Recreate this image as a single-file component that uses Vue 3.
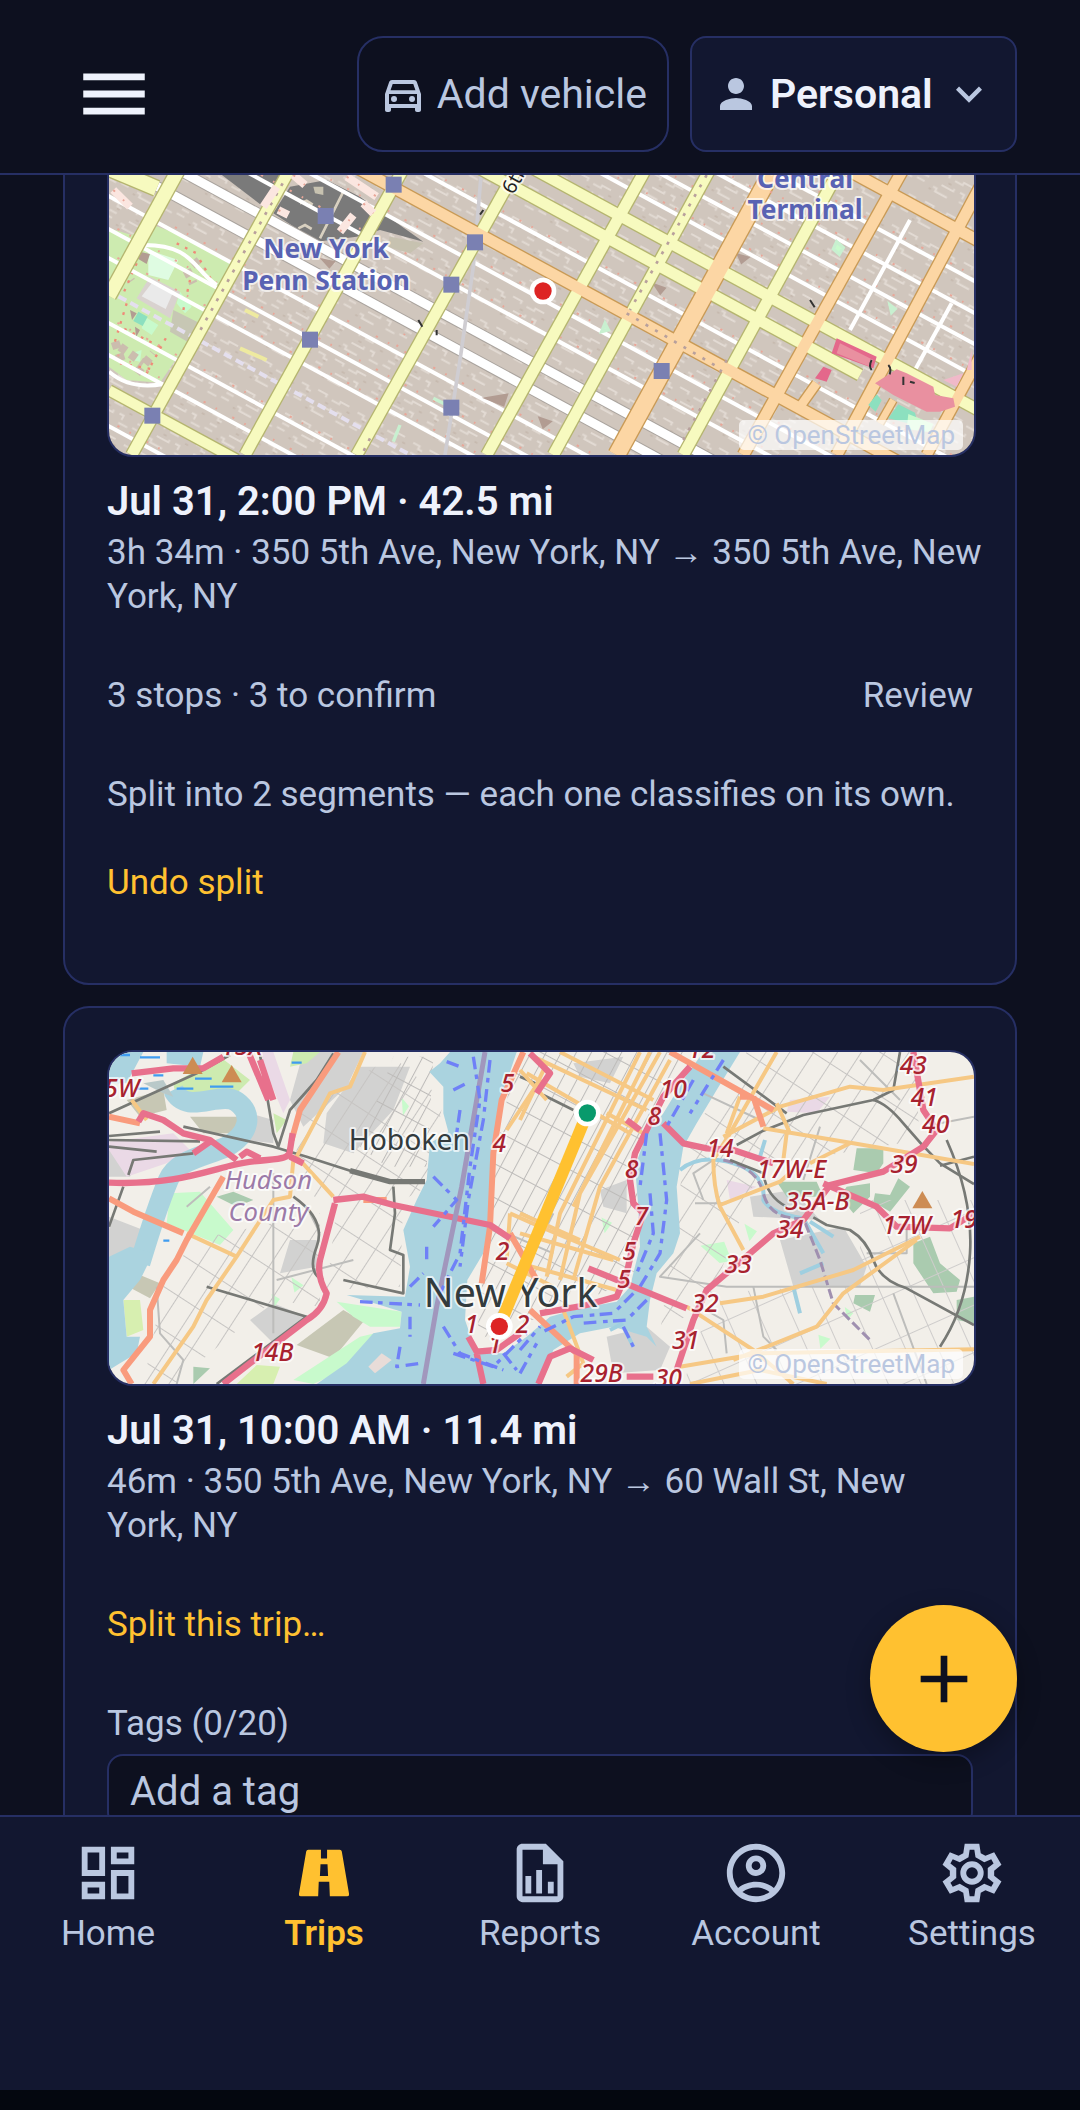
<template>
  <div class="app">
    <header class="topbar">
      <button class="menu-btn" type="button" aria-label="Open menu">
        <svg viewBox="0 0 24 24"><path d="M3 18h18v-2H3v2zm0-5h18v-2H3v2zm0-7v2h18V6H3z" /></svg>
      </button>
      <button class="vehicle-btn" type="button">
        <svg viewBox="0 0 24 24">
          <path d="M18.92 6.01C18.72 5.42 18.16 5 17.5 5h-11c-.66 0-1.21.42-1.42 1.01L3 12v8c0 .55.45 1 1 1h1c.55 0 1-.45 1-1v-1h12v1c0 .55.45 1 1 1h1c.55 0 1-.45 1-1v-8l-2.08-5.99zM6.85 7h10.29l1.08 3.11H5.77L6.85 7zM19 17H5v-5h14v5z" />
          <circle cx="7.5" cy="14.5" r="1.5" />
          <circle cx="16.5" cy="14.5" r="1.5" />
        </svg>
        Add vehicle
      </button>
      <div class="profile">
        <svg viewBox="0 0 24 24"><path d="M12 12c2.21 0 4-1.79 4-4s-1.79-4-4-4-4 1.79-4 4 1.79 4 4 4zm0 2c-2.67 0-8 1.34-8 4v2h16v-2c0-2.66-5.33-4-8-4z" /></svg>
        <select v-model="profile" aria-label="Profile">
          <option>Personal</option>
        </select>
        <svg class="chevron" viewBox="0 0 24 24"><path d="M16.59 8.59L12 13.17 7.41 8.59 6 10l6 6 6-6z" /></svg>
      </div>
    </header>

    <main class="content">
      <div class="trips">
        <article class="card">
          <div class="map">
            <svg class="tiles" viewBox="147 -111 2595 996" preserveAspectRatio="xMidYMid slice" role="img" aria-label="Midtown map">
              <defs>
                <pattern id="blocks" width="190" height="105" patternUnits="userSpaceOnUse" patternTransform="rotate(28.5)">
                  <rect width="190" height="105" fill="#d0c6bd" />
                  <path d="M6 30h22v10h14M60 26h30v10M110 34h26v-8h30M12 60h24M80 64h40v-8M140 58h14v14M4 78h26M60 80h12v10h40M150 84h30" fill="none" stroke="#e2dad3" stroke-width="6" />
                  <path d="M30 46h8M96 50h10M50 90h8M166 44h10" stroke="#c6b9ae" stroke-width="5" />
                </pattern>
              </defs>
              <rect x="147" y="-111" width="2595" height="996" fill="url(#blocks)" />

              <!-- park -->
              <path d="M147 205L215 225 280 195 400 240 530 320 445 455 300 668 200 660 147 620z" fill="#cdebb0" />
              <path d="M265 270l90 30-30 60-60-15z" fill="#dffce2" />
              <path d="M360 395l35 45-20 20-25-30zM215 580l30-10-5 35-25-5zM255 470l40 25-20 30-30-20z" fill="#c8facc" />
              <path d="M235 455l28 15-15 28-28-15z" fill="#8ce0bf" />
              <path d="M270 350l90 45-30 80-100-60z" fill="#d9d2cf" />
              <path d="M275 370l62 32-20 45-72-38z" fill="#eaeaea" />
              <path d="M225 272l45 10-10 30-25-15zM210 450l20 10-14 20zM225 500l15 10-12 22z" fill="#b29c92" />
              <path d="M340 450l80 40-30 60-60-35z" fill="#c7c7b4" />
              <path d="M165 545l20 60M400 300l26 30M380 330l20 40M190 330l24 34M180 560l70 50M230 640l50-60" stroke="#cbbdae" stroke-width="26" stroke-dasharray="22 16" fill="none" />
              <path d="M180 330l60-60M200 430L160 560M300 560L180 500M260 640l60-110M420 300l40 70M390 360l-20 90M230 310l-40 90M350 250l60 30M180 610l110 20" stroke="#ef8b78" stroke-width="7" stroke-dasharray="8 20" fill="none" />

              <!-- rail yard -->
              <path d="M466 30L668 30 610 140zM690 80L800 60 900 110 1090 245 960 210 890 230 770 245 640 160z" fill="#7a7a7a" />
              <path d="M760 80l30 0 0 25-25-5zM990 230l100 20-40 30-70-20z" fill="#c7c2b0" />
              <path d="M720 130l20-8 18 12M715 205l20-10 20 12M850 95L780 235" fill="none" stroke="#d8d0c0" stroke-width="8" />

              <path v-for="c in streets" :key="'r' + c" :d="street(c - 15)" class="specks" />
              <path v-for="c in streets" :key="'s' + c" :d="street(c)" class="street" />
              <path :d="street(314)" class="street dashed" />
              <path d="M240 255C400 250 400 330 470 375M147 635Q210 690 310 672M2550 180L2370 510M2675 430L2565 630" class="street" />
              <path v-for="c in [-163, -79]" :key="'w' + c" :d="street(c)" class="wide-casing" />
              <path v-for="c in [-163, -79]" :key="'x' + c" :d="street(c)" class="wide" />
              <path d="M1265 -111L1262 60 1240 320 1200 600 1155 885" fill="none" stroke="#cfcdd2" stroke-width="11" />
              <path d="M540 565L620 600M555 450l40 20" stroke="#eeeaa0" stroke-width="12" />
              <path d="M1020 795l-20 50M1120 715l40 20M2330 245l20 18-12 20-18-16zM1635 490l10 20-20 5zM2490 435l15 12-10 10z" fill="#c8facc" stroke="#c8f0d0" stroke-width="10" />
              <path d="M1280 715l60-10-10 30zM1440 775l30 10-20 16zM790 300l30 6-12 14zM2035 285l28 8-18 14zM1785 375l28 10-12 14z" fill="#b29c92" stroke="#b29c92" stroke-width="8" />

              <path v-for="r in midtown" :key="'c' + r.d" :d="r.d" fill="none" :stroke="r.casing" :stroke-width="r.w + 8" />
              <path v-for="r in midtown" :key="'f' + r.d" :d="r.d" fill="none" :stroke="r.fill" :stroke-width="r.w" />
              <path d="M668 70L410 530M1940 45L1710 450M930 835L905 885M2000 600L1870 840M1700 460L1980 625" class="dots" />

              <path d="M650 80l-40 60M700 45l35 30M860 50l90 60M840 215l40-50M910 130l30 30M160 90l50 50M655 150l30 15" class="specks heavy" />
              <path d="M700 45l35 30M860 50l90 60M840 215l40-50M910 130l30 30M160 90l50 50M655 150l30 15M1010 560l25-40M2130 95l50 25" class="specks" />
              <path d="M2330 535L2450 590 2440 625 2315 580zM2290 620l25 10-15 35-35-10z" fill="#e4688b" />
              <path d="M2340 550L2440 600 2430 620 2330 580zM2445 670L2510 628 2540 640 2620 680 2625 705 2680 715 2685 740 2640 755 2600 755 2500 705z" fill="#e990a0" />
              <path d="M2650 660l60-20-20 40zM2735 570v60h-15z" fill="#f0b9c9" />
              <path d="M2425 735l25-32 15 18-18 34zM2485 775l30-42 50 25 10 40z" fill="#8ce0bf" />
              <path d="M2545 762l75 30-10 25-70-10z" fill="#c8facc" />
              <path d="M2435 600q-10 20 0 30M2485 615q10 10 4 28M2530 650v25M2550 665l14 4M1270 150l-10 14M1075 480l12 20M1130 510v16M2250 420l14 22" stroke="#333" stroke-width="6" fill="none" />

              <rect v-for="([x, y], i) in stations" :key="i" :x="x - 24" :y="y - 24" width="48" height="48" fill="#7a80b2" />
              <g class="station-label">
                <text x="798" y="295">New York</text>
                <text x="798" y="389">Penn Station</text>
                <text x="2235" y="83">Central</text>
                <text x="2235" y="177">Terminal</text>
              </g>
              <text class="ave-label" transform="translate(1360 106) rotate(-61)">6th Avenue</text>

              <circle cx="1449" cy="393" r="40" fill="#fff" />
              <circle cx="1449" cy="393" r="26" fill="#dd2424" />
            </svg>
            <span class="credit">© OpenStreetMap</span>
          </div>
          <h2>Jul 31, 2:00 PM · 42.5 mi</h2>
          <p class="route">3h 34m · 350 5th Ave, New York, NY → 350 5th Ave, New York, NY</p>
          <div class="row stops">
            <span>3 stops · 3 to confirm</span>
            <button class="text-btn" type="button">Review</button>
          </div>
          <p class="note">Split into 2 segments — each one classifies on its own.</p>
          <button class="text-btn accent undo" type="button">Undo split</button>
        </article>

        <article class="card">
          <div class="map">
            <svg class="tiles" viewBox="147 156 2595 996" preserveAspectRatio="xMidYMid slice" role="img" aria-label="New York trip map">
              <defs>
                <pattern id="gridA" width="40" height="90" patternUnits="userSpaceOnUse" patternTransform="rotate(28)">
                  <path d="M0 0V90M0 0H40" stroke="#bdbbb9" stroke-width="6" fill="none" />
                </pattern>
                <pattern id="gridB" width="60" height="110" patternUnits="userSpaceOnUse" patternTransform="rotate(33)">
                  <path d="M0 0V110M0 0H60" stroke="#c6c4c2" stroke-width="6" fill="none" />
                </pattern>
                <pattern id="gridC" width="90" height="130" patternUnits="userSpaceOnUse" patternTransform="rotate(-24)">
                  <path d="M0 0V130M0 0H90" stroke="#cecccb" stroke-width="6" fill="none" />
                </pattern>
              </defs>
              <rect x="147" y="156" width="2595" height="996" fill="#f2efe9" />

              <!-- land use -->
              <path d="M730 156H910L860 260 730 380 690 300zM147 430L260 440 210 530 147 530zM800 340L900 200 1050 200 1000 330 880 460 790 430zM147 650L250 690 250 760 180 780 147 770zM570 340L640 360 640 430 560 420zM570 960L640 910 740 950 640 1030zM690 720L770 720 770 800 660 820z" fill="#d2d2d1" />
              <path d="M1540 190L1690 170 1650 250 1560 230zM1620 570L1700 540 1700 640 1630 620zM2070 590L2200 570 2280 660 2080 650zM2160 720L2350 680 2420 800 2400 860 2200 860zM1640 1010L1760 980 1830 1040 1800 1110 1660 1120z" fill="#d2d2d1" />
              <path d="M600 156H640L690 300 670 340 620 220zM147 425L340 400 390 450 320 490 200 530 147 450zM2190 300L2310 290 2270 340 2180 335zM2000 540L2090 560 2010 600z" fill="#ead9e6" />
              <path d="M480 170L570 240 530 280 350 305 340 250zM700 156H780L740 190 690 200zM640 340L680 360 650 400z" fill="#cdebb0" />
              <path d="M200 300L310 270 320 330 240 350zM390 350L550 350 530 400 430 400zM850 930L910 965 820 1075 710 1035zM240 825L300 850 270 895 205 860z" fill="#c7c7b4" />
              <path d="M330 580L420 575 520 690 480 735 320 670zM830 905L1025 935 1020 980 930 980 880 950zM900 1010L945 1000 850 1110 760 1152 700 1140z" fill="#c8facc" />
              <path d="M590 1095L660 1100 640 1152H530zM190 900L240 900 250 990 200 1010z" fill="#d7efb0" />
              <path d="M2390 445L2470 445 2470 490 2450 520 2380 510zM2150 545L2270 545 2290 590 2180 590zM2360 560L2430 550 2430 590 2380 640 2340 590zM2445 580L2490 585 2515 535 2550 560 2490 635 2440 605zM2560 730L2610 710 2640 790 2700 840 2690 875 2620 880 2560 790zM2385 885L2445 885 2430 935 2380 910zM2690 900L2742 890V970L2690 960zM470 590L520 575 580 600 530 620zM400 1100L450 1105 400 1152z" fill="#aacbaf" />
              <path d="M1930 740l60-10 20 50-30 5zM2060 680l25 15-15 20zM1630 660l20 10-14 20zM1030 305l12 14-10 16zM700 840l24 16-18 14zM640 890l14 8-10 14zM2280 1010l24 8-20 20zM2360 930l14 10-10 12zM2410 1110l30 10" fill="#c8facc" stroke="#c8facc" stroke-width="8" />

              <path d="M720 330L1000 170 1150 300 1100 560 1030 600 1020 860 800 870 830 620 700 560z" fill="url(#gridB)" />
              <path d="M400 720L780 640 780 920 640 900 340 1152H250L310 860z" fill="url(#gridB)" />
              <path d="M1370 156H1900L1740 430 1720 840 1500 930 1250 1020 1300 500z" fill="url(#gridA)" />
              <path d="M1000 170L1120 170 1100 500 980 500 900 440z" fill="url(#gridA)" />
              <path d="M1880 420L2060 156H2560L2580 420 2100 500 1950 900 1800 1000z" fill="url(#gridB)" />
              <path d="M1960 880L2250 860 2742 860V1152H1870zM2400 600H2742V860H2400z" fill="url(#gridC)" />

              <!-- water -->
              <path d="M1170 156L1140 190 1108 215 1150 260 1150 340 1165 395 1110 430 1100 540 1070 600 1030 690 1050 800 1035 890 860 885 960 915 1025 935 1020 985 940 1000 860 1090 770 1152H1440L1480 1050 1560 1000 1660 980 1760 1010 1790 1040 1760 980 1770 900 1790 820 1840 760 1860 700 1850 560 1870 440 1910 370 1970 270 2040 156H1930L1880 225 1810 340 1760 400 1725 500 1735 620 1740 740 1710 860 1670 905 1560 925 1470 950 1400 1010 1330 1060 1250 1060 1215 960 1222 840 1270 760 1290 660 1300 450 1325 290 1370 156z" fill="#aad3df" />
              <path d="M340 270C380 350 480 270 530 305S570 400 500 440C430 470 350 480 325 540S270 690 240 790" fill="none" stroke="#aad3df" stroke-width="62" />
              <path d="M147 770L210 740 280 760 240 840 190 900 200 1010 240 1010 230 1060 180 1090 147 1110zM147 156H250L200 250 147 250zM320 156H430L420 200 320 190z" fill="#aad3df" />
              <path d="M250 250L310 240 340 290 310 280z" fill="#b9c9c9" />
              <path d="M925 1100l40-40 30 20-50 40z" fill="#e8dcd8" />
              <path d="M1860 510Q1920 460 2020 490T2110 600Q2130 640 2230 655L2290 760M2115 420L2100 470 2110 500M2250 665L2320 710M2220 820L2290 790M2200 860L2220 940M1690 980L1720 1040M1650 990L1690 970" fill="none" stroke="#9fcfe0" stroke-width="12" />
              <path d="M1990 480Q2090 500 2110 580T2230 655L2280 780 2320 910 2430 1020" fill="none" stroke="#a090b0" stroke-width="9" stroke-dasharray="30 12" />

              <path v-for="d in minor" :key="d" :d="d" class="line minor" />
              <path v-for="d in rail" :key="d" :d="d" class="line rail" />
              <path d="M870 512L990 545H1095" class="line" stroke="#777975" stroke-width="16" />
              <path v-for="d in secondary" :key="d" :d="d" class="line secondary" />
              <path v-for="d in primary" :key="d" :d="d" class="line primary" />
              <path v-for="d in motorway" :key="d" :d="d" class="line motorway" />

              <!-- ferries and the river boundary -->
              <path d="M1275 156L1205 560 1130 920 1090 1152" fill="none" stroke="#a197bd" stroke-width="15" />
              <path v-for="d in ferries" :key="d" :d="d" class="line ferry" />
              <path d="M240 172h60M280 226h30M405 236h50M450 260h70M350 266h50M695 188h30M225 266h40M310 722h18M180 165h30" stroke="#3f9cf0" stroke-width="7" />

              <path v-for="([x, y], i) in peaks" :key="i" :d="`M${x} ${y}l30 52h-60z`" fill="#cd8c53" />

              <g class="exit-label">
                <text v-for="([t, x, y], i) in exits" :key="i" :x="x" :y="y">{{ t }}</text>
              </g>
              <text class="town" x="1048" y="449">Hoboken</text>
              <g class="county">
                <text x="625" y="568">Hudson</text>
                <text x="625" y="663">County</text>
              </g>
              <text class="city" x="1352" y="920">New York</text>

              <path d="M1318 979L1582 339" stroke="#ffc130" stroke-width="36" />
              <circle cx="1318" cy="979" r="40" fill="#fff" />
              <circle cx="1318" cy="979" r="26" fill="#dd2424" />
              <circle cx="1582" cy="339" r="40" fill="#fff" />
              <circle cx="1582" cy="339" r="26" fill="#089a6c" />
            </svg>
            <span class="credit">© OpenStreetMap</span>
          </div>
          <h2>Jul 31, 10:00 AM · 11.4 mi</h2>
          <p class="route">46m · 350 5th Ave, New York, NY → 60 Wall St, New York, NY</p>
          <button class="text-btn accent split" type="button">Split this trip…</button>
          <label class="tag-label" for="tag">Tags (0/20)</label>
          <input id="tag" v-model="tag" class="tag-input" type="text" placeholder="Add a tag" />
        </article>
      </div>

      <button class="fab" type="button" aria-label="Add trip">
        <svg viewBox="0 0 24 24"><path d="M19 13h-6v6h-2v-6H5v-2h6V5h2v6h6v2z" /></svg>
      </button>
    </main>

    <nav class="tabs">
      <a v-for="tab in tabs" :key="tab.name" href="#" :class="{ active: tab.name === 'Trips' }">
        <svg viewBox="0 0 24 24"><path fill-rule="evenodd" :d="tab.icon" /></svg>
        {{ tab.name }}
      </a>
    </nav>
  </div>
</template>

<script setup>
import { ref } from 'vue'

const profile = ref('Personal')
const tag = ref('')

const tabs = [
  { name: 'Home', icon: 'M19 5v2h-4V5h4M9 5v6H5V5h4m10 8v6h-4v-6h4M9 17v2H5v-2h4M21 3h-8v6h8V3zM11 3H3v10h8V3zm10 8h-8v10h8V11zm-10 4H3v6h8v-6z' },
  { name: 'Trips', icon: 'M6.6 4H10.95V7H13.05V4H17.4Q18 4 18.1 4.6L20.6 19.2Q20.7 20 20 20H14L13.8 15H10.2L10 20H4Q3.3 20 3.4 19.2L5.9 4.6Q6 4 6.6 4zM10.8 9L10.6 13H13.4L13.2 9z' },
  { name: 'Reports', icon: 'M14 2H6c-1.1 0-2 .9-2 2v16c0 1.1.9 2 2 2h12c1.1 0 2-.9 2-2V8l-6-6zM6 4h7v5h5v11H6V4zM7 13h2v6H7zM10.7 11h2v8h-2zM14.7 15h2v4h-2z' },
  { name: 'Account', icon: 'M12 2C6.48 2 2 6.48 2 12s4.48 10 10 10 10-4.48 10-10S17.52 2 12 2zM7.35 18.5C8.66 17.56 10.26 17 12 17s3.34.56 4.65 1.5C15.34 19.44 13.74 20 12 20s-3.34-.56-4.65-1.5zm10.79-1.38C16.45 15.8 14.32 15 12 15s-4.45.8-6.14 2.12C4.7 15.73 4 13.95 4 12c0-4.42 3.58-8 8-8s8 3.58 8 8c0 1.95-.7 3.73-1.86 5.12zM12 6c-1.93 0-3.5 1.57-3.5 3.5S10.07 13 12 13s3.5-1.57 3.5-3.5S13.93 6 12 6zm0 5c-.83 0-1.5-.67-1.5-1.5S11.17 8 12 8s1.5.67 1.5 1.5S12.83 11 12 11z' },
  { name: 'Settings', icon: 'M9.5 2h5l.5 3.2 1.6.9 3-1.2 2.5 4.3-2.5 2v1.7l2.5 2-2.5 4.2-3-1.2-1.6.9-.5 3.2h-5L9 18.8l-1.6-.9-3 1.2-2.5-4.2 2.5-2v-1.7l-2.5-2 2.5-4.3 3 1.2L9 5.2zM11.2 4l-.4 2.6-3 1.7-2.4-1-.8 1.4 2 1.6v3.4l-2 1.6.8 1.4 2.4-1 3 1.7.4 2.6h1.6l.4-2.6 3-1.7 2.4 1 .8-1.4-2-1.6v-3.4l2-1.6-.8-1.4-2.4 1-3-1.7L12.8 4zM12 8a4 4 0 1 0 0 8 4 4 0 0 0 0-8zm0 2a2 2 0 1 1 0 4 2 2 0 0 1 0-4z' }
]

// Cross streets all share one slope, c is the intercept
const street = (c) => `M0 ${c}L2800 ${c + 1520}`
const streets = [-1126, -1030, -937, -841, -553, -367, -268, 29, 128, 215, 410, 506, 719, 818]

const yellow = { fill: '#f7fabf', casing: '#b5b56f' }
const orange = { fill: '#fcd6a4', casing: '#c99a55' }
const midtown = [
  { d: 'M432 -111L147 408', w: 40, ...yellow },
  { d: 'M766 -111L215 885', w: 33, ...yellow },
  { d: 'M1106 -111L555 885', w: 33, ...yellow },
  { d: 'M1447 -111L890 885', w: 33, ...yellow },
  { d: 'M1834 -111L1280 885', w: 33, ...yellow },
  { d: 'M2026 -111L1480 885', w: 33, ...yellow },
  { d: 'M2415 -111L1870 885', w: 33, ...yellow },
  { d: 'M147 25L290 85', w: 45, ...yellow },
  { d: 'M147 691L530 899', w: 30, ...yellow },
  { d: 'M1050 -175L2800 775', w: 33, ...yellow },
  { d: 'M1100 -61L2400 645', w: 33, ...yellow },
  { d: 'M800 -26L2560 930', w: 33, ...orange },
  { d: 'M2216 -111L1670 885', w: 50, ...orange },
  { d: 'M2607 -111L2050 885', w: 33, ...orange },
  { d: 'M2863 -111L2330 885', w: 33, ...orange },
  { d: 'M2770 570L2600 885', w: 30, ...orange },
  { d: 'M2270 670L2220 740', w: 26, ...orange },
  { d: 'M2500 720L2460 790', w: 20, ...orange },
  { d: 'M2300 -4L2800 267', w: 33, ...orange }
]
const stations = [[1001, 74], [797, 168], [1245, 247], [1174, 374], [750, 539], [277, 767], [1174, 743], [1805, 633]]

const minor = [
  'M640 520L640 1000M290 860L300 1000 370 1080 350 1152M450 560L380 620M1480 640L1420 760M650 840L880 780M750 640L780 700',
  'M1340 700L1480 760M1930 600L1900 520 1960 480M1905 610H2000M1920 700L1800 830 2000 860H2742',
  'M2230 540L2280 380M2540 660V760H2420M2000 1060L1990 960 1920 920M2080 860L2110 1010 2150 1050M2500 880L2600 1152',
  'M2742 350L2640 370 2600 440M2400 180L2520 300M1930 280L2100 360'
]
const rail = [
  'M147 340L420 215 510 165',
  'M147 408L300 395M147 420L420 424',
  'M370 380L640 440 740 470 880 515',
  'M600 165L640 400 655 440 690 330 770 240 820 160',
  'M147 440L290 455M205 525L220 480 400 460M190 560L147 680',
  'M700 590Q800 660 770 740T790 840',
  'M440 860L740 950 470 1152',
  'M1380 230L1450 260M1450 285L1540 330',
  'M2030 435L2110 392 2230 345 2440 300 2500 270 2520 156M2180 340L1990 200',
  'M2440 300Q2480 310 2530 370T2640 490L2742 552M2640 497L2742 470',
  'M2260 652L2300 675 2370 690Q2420 720 2440 780T2540 865L2742 975',
  'M2660 420Q2740 600 2730 760T2640 1040M2010 480L2110 520Q2120 590 2180 620',
  'M1000 560L1005 640 990 750 1030 765V880L850 840'
]
const secondary = [
  'M915 156L870 260 810 280 710 470 820 590',
  'M380 700L530 770M700 480L690 590 640 600 530 770 440 900 400 980 280 1152M215 300L260 360',
  'M1350 640L1340 780M1350 640L1440 680 1680 780M1340 790L1480 860M1440 240L1340 390M1380 210L1460 300',
  'M1740 156L1500 640 1460 830M1800 156L1560 580 1500 840M1770 156L1540 620M1830 180L1620 560 1540 840',
  'M1380 360L1460 190M1420 170L1760 330M1400 220L1710 400M1500 156L1780 300',
  'M1380 700L1660 780M1380 640L1560 720M1380 790L1670 870M1640 340L1750 400',
  'M2150 156L2010 400 1960 480Q1960 560 1980 620L2050 750M1990 410L2160 320 2370 260 2470 270 2742 230',
  'M2110 385L2380 430 2742 492M2180 400L2170 480M2370 430L2250 490M2150 310L2190 400M2040 290L2000 400',
  'M1980 615L2160 545 2200 510M1980 910L2110 890 2380 810 2580 710',
  'M1880 920L2080 1050 2200 1152M2020 1080L2270 980 2350 880 2570 720M1860 1100L2100 1060 2742 1048M1890 1152L2100 1110 2300 1152',
  'M1510 930L1570 1090 1520 1130'
]
const primary = [
  'M835 156L720 330 695 420M490 530L380 720 350 780 310 840 270 930 270 1010 190 1110 215 1152',
  'M147 595L220 635 370 700M147 350L240 370M910 600H980',
  'M1390 156L1325 300 1300 460 1290 680 1265 850M1350 700L1430 840',
  'M1830 156L2070 290 2140 330M2080 290L2110 380M2070 290H2040M1410 930L1550 1060V1152'
]
const motorway = [
  'M147 548C330 555 420 520 520 495S690 490 690 450L698 400M540 470L560 455 600 475M690 470L730 490',
  'M235 365L250 340 310 360 370 400 450 420 530 480M400 460L450 425',
  'M215 220L340 205 430 205 490 170M565 156L625 300M600 180L640 300',
  'M820 600L910 590 1000 615 1290 675 1350 715',
  'M825 610L780 780Q770 830 800 880 790 930 740 960L570 1090 490 1152',
  'M1410 160L1470 220 1430 280M1700 360L1740 390',
  'M1890 200L1810 290 1765 380 1725 460 1710 540 1720 610 1750 640 1720 730 1700 820 1670 890 1580 915 1440 940',
  'M1810 370L1870 430 1940 445 2020 450 2140 490',
  'M1585 805L1880 925',
  'M2560 156L2590 330 2630 390 2590 440 2470 515 2310 555 2230 660 2140 700 2070 760 1940 870 1900 960 1850 1110',
  'M2290 550L2450 620 2510 680 2670 685 2742 640',
  'M1435 1152L1470 1070 1530 1045 1600 1080M1700 1130H1780',
  'M1225 1010L1250 1055 1310 1050 1380 1000M1250 1060L1270 1152'
]
const ferries = [
  'M1240 170L1260 300 1230 500 1200 760 1130 900M1290 180L1270 360 1225 600 1200 800',
  'M1180 270L1220 250M1160 185L1200 200M1200 330L1190 400M1120 530L1190 600 1120 680M1100 740V790M1050 860L1090 820',
  'M900 905L1080 915M1050 950V1010M1020 1040L1010 1100 1080 1090M1150 980L1200 1060 1330 1110M1180 1060L1300 1100 1400 1000M1330 1060L1370 1110',
  'M1900 240L1820 380M1990 180L1890 340M1760 400L1740 560M1800 400L1820 600 1800 760 1740 860M1770 580L1780 700 1730 820',
  'M1720 880L1660 940 1540 950 1440 1000M1760 900L1700 960 1560 970M1380 1050L1440 980M1690 980L1720 1040M1380 1120L1430 1030'
]
const peaks = [[398, 170], [515, 195], [2587, 573]]
const exits = [
  ['15W', 165, 290], ['15X', 545, 166], ['5', 1343, 275], ['4', 1318, 455], ['2', 1328, 780], ['1', 1235, 1000],
  ['2', 1388, 1000], ['1', 1305, 1060], ['14B', 637, 1083], ['12', 1925, 175], ['10', 1840, 293], ['8', 1783, 375],
  ['8', 1715, 535], ['7', 1745, 675], ['5', 1708, 780], ['5', 1692, 865], ['14', 1980, 472], ['17W-E', 2195, 535],
  ['39', 2532, 520], ['43', 2560, 222], ['41', 2593, 317], ['40', 2627, 400], ['35A-B', 2272, 630], ['34', 2190, 715],
  ['17W', 2540, 703], ['19', 2712, 685], ['33', 2035, 818], ['32', 1935, 935], ['31', 1877, 1048], ['29B', 1625, 1145],
  ['30', 1825, 1160]
]
</script>

<style>
body {
  margin: 0;
  background: #04070f;
}
</style>

<style scoped>
.app {
  display: flex;
  flex-direction: column;
  box-sizing: border-box;
  height: 100vh;
  padding-bottom: 20px;
  background: #04070f;
  color: #bac7e0;
  font-family: Roboto, 'Noto Sans', sans-serif;
  font-size: 35px;
  line-height: 44px;
}

button,
select,
input {
  font: inherit;
  color: inherit;
}

svg {
  display: block;
  fill: currentColor;
}

/* top bar */
.topbar {
  display: flex;
  align-items: center;
  gap: 21px;
  padding: 36px 63px 21px;
  border-bottom: 2px solid #262f64;
  background: #0d101f;
}

.topbar button,
.profile {
  display: flex;
  align-items: center;
  box-sizing: border-box;
  height: 116px;
  gap: 10px;
  padding: 0 20px;
  border: 2px solid #262f64;
  font-size: 41px;
  white-space: nowrap;
}

.topbar svg {
  width: 48px;
  height: 48px;
}

.topbar .menu-btn {
  margin-right: auto;
  padding: 0 10px;
  border: 0;
  background: none;
  color: #eef2fc;
}

.topbar .menu-btn svg {
  width: 82px;
  height: 82px;
}

.vehicle-btn {
  border-radius: 26px;
  background: none;
}

.profile {
  border-radius: 16px;
  background: #121730;
}

.profile select {
  padding: 0;
  border: 0;
  appearance: none;
  background: none;
  color: #eef2fc;
  font-weight: 600;
}

.topbar .chevron {
  width: 52px;
  height: 52px;
}

/* trip list */
.content {
  position: relative;
  flex: 1;
  min-height: 0;
  overflow: hidden;
  background: #0d101f;
}

.trips {
  display: flex;
  flex-direction: column;
  gap: 21px;
  margin-top: -98px;
  padding: 0 63px;
}

.card {
  display: flex;
  flex-direction: column;
  padding: 42px;
  border: 2px solid #262f64;
  border-radius: 26px;
  background: #121730;
}

.map {
  position: relative;
  margin: 0 -3px 20px 0;
  border: 2px solid #262f64;
  border-radius: 26px;
  overflow: hidden;
}

.tiles {
  width: 100%;
  height: 332px;
}

.credit {
  position: absolute;
  right: 11px;
  bottom: 5px;
  padding: 0 8px;
  border-radius: 5px;
  background: rgba(255, 255, 255, 0.7);
  font-size: 26px;
  line-height: 30px;
}

h2 {
  margin: 0 0 4px;
  color: #eef2fc;
  font-size: 40px;
  font-weight: 600;
  line-height: 50px;
}

p {
  margin: 0;
}

.route {
  margin: 0 -9px 19px 0;
}

.row {
  display: flex;
  align-items: center;
  justify-content: space-between;
}

.text-btn {
  align-self: flex-start;
  height: 116px;
  padding: 0;
  border: 0;
  background: none;
}

.accent {
  color: #ffc130;
}

.stops,
.split {
  margin-bottom: 19px;
}

.undo {
  margin-top: 8px;
}

.tag-label {
  margin-bottom: 8px;
}

.tag-input {
  box-sizing: border-box;
  height: 74px;
  padding: 0 21px;
  border: 2px solid #262f64;
  border-radius: 16px;
  background: #0d101f;
  font-size: 40px;
}

.tag-input::placeholder {
  color: #bac7e0;
  opacity: 1;
}

.fab {
  position: absolute;
  right: 63px;
  bottom: 63px;
  display: grid;
  place-items: center;
  width: 147px;
  height: 147px;
  padding: 0;
  border: 0;
  border-radius: 50%;
  background: #ffc130;
  color: #0d101f;
  box-shadow: 0 8px 24px rgba(0, 0, 0, 0.3);
}

.fab svg {
  width: 80px;
  height: 80px;
}

/* bottom tabs */
.tabs {
  display: grid;
  grid-template-columns: repeat(5, 1fr);
  padding: 21px 0 134px;
  border-top: 2px solid #262f64;
  background: #121730;
}

.tabs a {
  display: flex;
  flex-direction: column;
  align-items: center;
  gap: 4px;
  color: inherit;
  text-decoration: none;
}

.tabs svg {
  width: 70px;
  height: 70px;
}

.tabs .active {
  color: #ffc130;
  font-weight: 600;
}

/* map strokes */
.street {
  fill: none;
  stroke: #fff;
  stroke-width: 12;
}

.dashed {
  stroke: #e4dfee;
  stroke-dasharray: 26 14;
}

.specks {
  fill: none;
  stroke: #e9a698;
  stroke-width: 6;
  stroke-dasharray: 7 34 5 52;
}

.heavy {
  stroke: #fbe6e0;
  stroke-width: 24;
  stroke-dasharray: none;
}

.wide-casing {
  fill: none;
  stroke: #a9a39d;
  stroke-width: 33;
}

.wide {
  fill: none;
  stroke: #fff;
  stroke-width: 27;
}

.dots {
  fill: none;
  stroke: #b8a09c;
  stroke-width: 8;
  stroke-dasharray: 9 24;
}

.line {
  fill: none;
  stroke-linejoin: round;
}

.minor {
  stroke: #bdbdbb;
  stroke-width: 6;
}

.rail {
  stroke: #777975;
  stroke-width: 8;
}

.secondary {
  stroke: #f6c884;
  stroke-width: 12;
}

.primary {
  stroke: #f99b7d;
  stroke-width: 18;
}

.motorway {
  stroke: #e8708c;
  stroke-width: 19;
}

.ferry {
  stroke: #6f80f7;
  stroke-width: 10;
  stroke-dasharray: 38 16 14 20;
}

.tiles text {
  font-family: 'Noto Sans', sans-serif;
  paint-order: stroke;
  stroke: rgba(255, 255, 255, 0.7);
  stroke-width: 12;
  stroke-linejoin: round;
  text-anchor: middle;
}

.station-label {
  fill: #5862b3;
  font-size: 79px;
  font-weight: 700;
}

.tiles .ave-label {
  fill: #222;
  font-size: 60px;
  text-anchor: start;
}

.exit-label {
  fill: #a8222f;
  font-size: 74px;
  font-style: italic;
  font-weight: 500;
}

.town {
  fill: #333b3d;
  font-size: 85px;
}

.county {
  fill: #9c7aa8;
  font-size: 77px;
  font-style: italic;
}

.city {
  fill: #333b3d;
  font-size: 118px;
}
</style>
